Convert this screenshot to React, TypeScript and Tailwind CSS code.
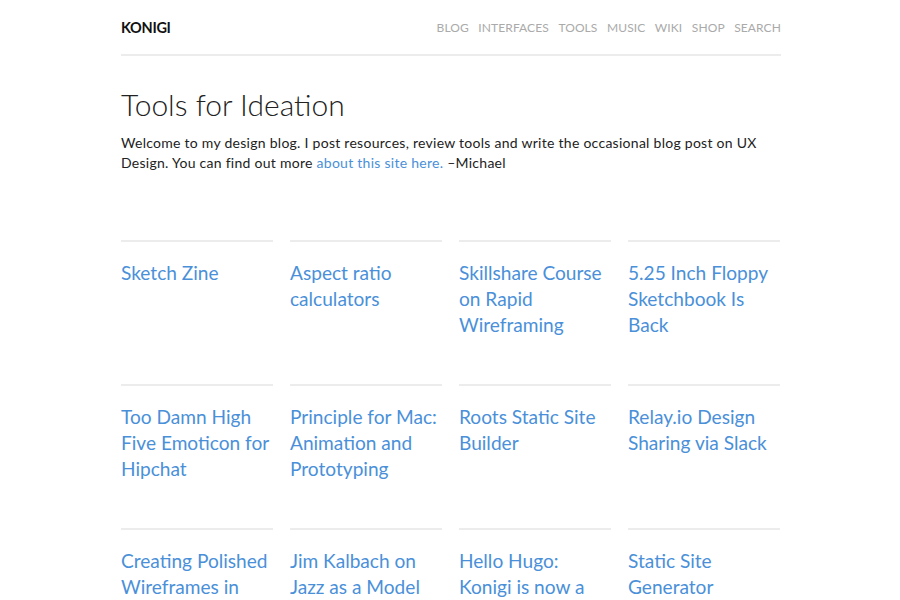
import React from 'react';

const navItems = ['Blog', 'Interfaces', 'Tools', 'Music', 'Wiki', 'Shop', 'Search'];

const posts = [
  'Sketch Zine',
  'Aspect ratio calculators',
  'Skillshare Course on Rapid Wireframing',
  '5.25 Inch Floppy Sketchbook Is Back',
  'Too Damn High Five Emoticon for Hipchat',
  'Principle for Mac: Animation and Prototyping',
  'Roots Static Site Builder',
  'Relay.io Design Sharing via Slack',
  'Creating Polished Wireframes in Keynote',
  'Jim Kalbach on Jazz as a Model for Design',
  'Hello Hugo: Konigi is now a Static Site',
  'Static Site Generator',
];

export default function App() {
  return (
    <div className="w-full h-screen overflow-hidden bg-white font-['Lato','Open_Sans',sans-serif] text-[#222]">
      <div className="w-[660px] ml-[121px]">
        {/* header */}
        <header className="flex items-center justify-between pt-[17px] pb-[15px] border-b-2 border-[#ececec]">
          <a className="text-[14.5px] font-bold tracking-[-0.3px] text-[#111]">KONIGI</a>
          <nav className="flex gap-[9.5px] text-[12px] uppercase text-[#aaaaaa] tracking-[0.1px]">
            {navItems.map((n) => (
              <a key={n}>{n}</a>
            ))}
          </nav>
        </header>

        <h1 className="mt-[28px] text-[30px] font-light leading-[40px] text-[#222]">Tools for Ideation</h1>
        <p className="mt-[9px] text-[14px] leading-[20px] tracking-[0.27px] text-[#222]">
          Welcome to my design blog. I post resources, review tools and write the occasional blog post on UX
          Design. You can find out more <a className="text-[#4a90d9]">about this site here.</a> –Michael
        </p>

        {/* post grid */}
        <div className="mt-[67px] grid grid-cols-[152px_152px_152px_152px] gap-x-[17px]">
          {posts.map((p) => (
            <div key={p} className="border-t-2 border-[#ececec] h-[144px] pt-[18px]">
              <a className="block text-[19.1px] leading-[26px] text-[#4a90d9]">{p}</a>
            </div>
          ))}
        </div>
      </div>
    </div>
  );
}
